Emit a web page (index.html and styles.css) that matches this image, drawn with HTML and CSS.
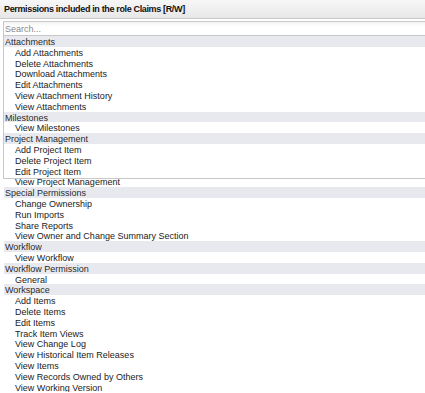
FILE: index.html
```html
<!DOCTYPE html>
<html lang="en">
<head>
  <meta charset="UTF-8" />
  <title>Permissions</title>
  <link rel="stylesheet" href="styles.css">
</head>
<body>
  <div class="header">Permissions included in the role Claims [R/W]</div>

  <div class="listbox">
    <input type="text" class="search" placeholder="Search..." />

    <ul class="perms">
      <li class="group">Attachments</li>
      <li>Add Attachments</li>
      <li>Delete Attachments</li>
      <li>Download Attachments</li>
      <li>Edit Attachments</li>
      <li>View Attachment History</li>
      <li>View Attachments</li>
      <li class="group">Milestones</li>
      <li>View Milestones</li>
      <li class="group">Project Management</li>
      <li>Add Project Item</li>
      <li>Delete Project Item</li>
      <li>Edit Project Item</li>
      <li>View Project Management</li>
      <li class="group">Special Permissions</li>
      <li>Change Ownership</li>
      <li>Run Imports</li>
      <li>Share Reports</li>
      <li>View Owner and Change Summary Section</li>
      <li class="group">Workflow</li>
      <li>View Workflow</li>
      <li class="group">Workflow Permission</li>
      <li>General</li>
      <li class="group">Workspace</li>
      <li>Add Items</li>
      <li>Delete Items</li>
      <li>Edit Items</li>
      <li>Track Item Views</li>
      <li>View Change Log</li>
      <li>View Historical Item Releases</li>
      <li>View Items</li>
      <li>View Records Owned by Others</li>
      <li>View Working Version</li>
    </ul>
  </div>
</body>
</html>
```

FILE: styles.css
```css
* {
  box-sizing: border-box;
  margin: 0;
  padding: 0;
}

body {
  font-family: "Liberation Sans", Arial, sans-serif;
  font-size: 9px;
  color: #222;
  background-color: #fff;
}

.header {
  height: 19px;
  padding: 0 4px;
  line-height: 18px;
  font-size: 9px;
  font-weight: bold;
  letter-spacing: -0.35px;
  color: #111;
  background: linear-gradient(#f7f7f7, #e7e7e7);
  border-bottom: 1px solid #c9c9c9;
}

.listbox {
  position: relative;
  margin: 2px 0 0 4px;
}

/* frame of the list box; the list runs on past its bottom edge */
.listbox::before {
  content: "";
  position: absolute;
  top: 0;
  left: -1px;
  right: 0;
  height: 156px;
  border: 1px solid #c8c8c8;
  border-right: none;
  pointer-events: none;
}

.search {
  display: block;
  width: 100%;
  height: 15px;
  padding: 0 1px;
  border: none;
  border-top: 1px solid #aaa;
  border-bottom: 1px solid #c8c8c8;
  background: linear-gradient(#f4f4f4, #fff 40%);
  font-family: "Liberation Sans", Arial, sans-serif;
  font-size: 9px;
  color: #222;
  outline: none;
}

.search::placeholder {
  color: #8a8a8a;
}

.perms {
  list-style: none;
}

.perms li {
  height: 10.8px;
  padding: 1px 0 0 11px;
  line-height: 10.8px;
  white-space: nowrap;
}

.perms li.group {
  padding-left: 1px;
  color: #2a2a2a;
  background-color: #e8e9ee;
}
```
